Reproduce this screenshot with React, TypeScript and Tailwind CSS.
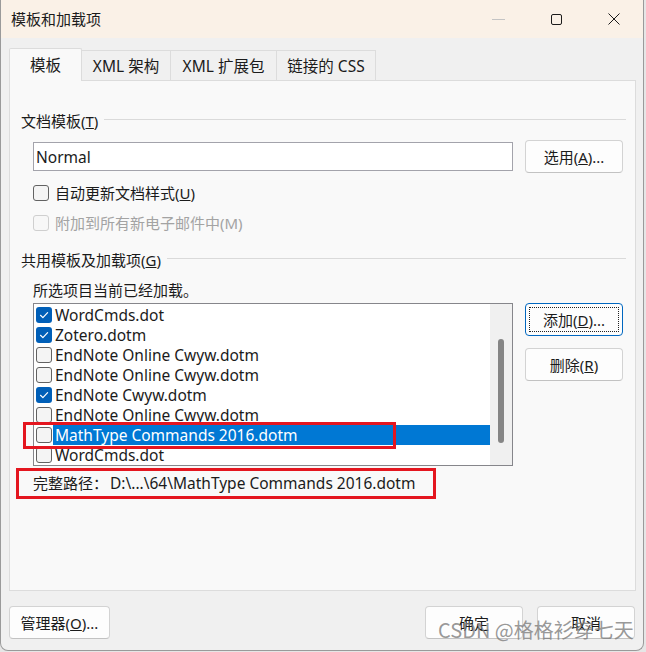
import React from "react";

const FONT = "font-['Noto_Sans','Noto_Sans_CJK_SC',sans-serif]";

function Check({ checked, disabled }: { checked?: boolean; disabled?: boolean }) {
  if (checked) {
    return (
      <span className="w-4 h-4 shrink-0 rounded-[3px] bg-[#005fb8] flex items-center justify-center">
        <svg width="12" height="12" viewBox="0 0 12 12" fill="none">
          <path d="M2.5 6.3 L4.9 8.6 L9.6 3.6" stroke="#ffffff" strokeWidth="1.2" strokeLinecap="round" strokeLinejoin="round" />
        </svg>
      </span>
    );
  }
  return (
    <span
      className={
        disabled
          ? "w-4 h-4 shrink-0 rounded-[3px] border border-[#cfcfcf] bg-[#f7f7f7]"
          : "w-4 h-4 shrink-0 rounded-[3px] border border-[#626262] bg-[#f4f4f4]"
      }
    />
  );
}

function Btn({ children, w, focused }: { children: React.ReactNode; w: string; focused?: boolean }) {
  return (
    <div
      className={
        (focused
          ? "border-[#0067c0] "
          : "border-[#d3d3d3] border-b-[#c2c2c2] ") +
        w +
        " h-[33px] rounded-[4px] border bg-[#fdfdfd] flex items-center justify-center relative text-[15px] leading-5 text-[#1b1b1b]"
      }
    >
      {focused && <div className="absolute inset-[3px] border border-dotted border-[#222]" />}
      <span className="relative">{children}</span>
    </div>
  );
}

const items: { name: string; checked: boolean; selected?: boolean }[] = [
  { name: "WordCmds.dot", checked: true },
  { name: "Zotero.dotm", checked: true },
  { name: "EndNote Online Cwyw.dotm", checked: false },
  { name: "EndNote Online Cwyw.dotm", checked: false },
  { name: "EndNote Cwyw.dotm", checked: true },
  { name: "EndNote Online Cwyw.dotm", checked: false },
  { name: "MathType Commands 2016.dotm", checked: false, selected: true },
  { name: "WordCmds.dot", checked: false },
];

function Header({ children }: { children: React.ReactNode }) {
  return (
    <div className="flex items-center h-5">
      <span className="text-[15px] leading-5 text-[#1b1b1b] whitespace-nowrap">{children}</span>
      <div className="flex-1 h-px bg-[#dadada] ml-[6px] mr-[9px] -mt-[3px]" />
    </div>
  );
}

export default function App() {
  return (
    <div className={"relative w-[646px] h-[652px] bg-[#e6e6e6] overflow-hidden " + FONT}>
      <div className="w-[644px] h-[651px] bg-[#f0f0f0] border-l border-r border-b border-[#9a9a9a] rounded-b-[8px] flex flex-col overflow-hidden">
        {/* Title bar */}
        <div className="h-[38px] bg-[#faf1e7] flex items-center shrink-0">
          <span className="pl-[10px] text-[15px] leading-5 text-[#1b1b1b]">模板和加载项</span>
          <div className="ml-auto flex h-full">
            <div className="w-[58px] h-full flex items-center justify-center">
              <div className="w-[13px] h-px bg-[#c4c4c4]" />
            </div>
            <div className="w-[58px] h-full flex items-center justify-center">
              <div className="w-[11px] h-[11px] border border-[#1b1b1b] rounded-[2px]" />
            </div>
            <div className="w-[58px] h-full flex items-center justify-center">
              <svg width="12" height="12" viewBox="0 0 12 12">
                <path d="M0.5 0.5 L11.5 11.5 M11.5 0.5 L0.5 11.5" stroke="#1b1b1b" strokeWidth="1" />
              </svg>
            </div>
          </div>
        </div>

        {/* Body */}
        <div className="pt-[10px] pl-[8px] pr-[8px] flex flex-col">
          {/* Tabs */}
          <div className="flex items-end h-[32px] text-[15.5px] leading-5 text-[#1b1b1b]">
            <div className="relative z-10 w-[73px] h-[33px] -mb-px bg-[#f9f9f9] border-t border-l border-r border-[#dcdcdc] rounded-t-[2px] flex items-center justify-center">
              模板
            </div>
            <div className="w-[89px] h-[30px] border-t border-r border-[#dcdcdc] flex items-center justify-center">
              XML 架构
            </div>
            <div className="w-[106px] h-[30px] border-t border-r border-[#dcdcdc] flex items-center justify-center">
              XML 扩展包
            </div>
            <div className="w-[99px] h-[30px] border-t border-r border-[#dcdcdc] flex items-center justify-center">
              链接的 CSS
            </div>
          </div>

          {/* Panel */}
          <div className="h-[511px] w-[627px] border border-[#dcdcdc] bg-[#f9f9f9] pl-[11px] pt-[30px] flex flex-col text-[15px] leading-5 text-[#1b1b1b]">
            <Header>
              文档模板(<span className="underline">T</span>)
            </Header>

            <div className="mt-[9px] ml-3 flex items-center gap-3">
              <div className="w-[480px] h-[29px] border border-[#a3a3ab] bg-white flex items-center pl-[2px] text-[15.5px]">
                Normal
              </div>
              <Btn w="w-[98px]">
                选用(<span className="underline">A</span>)...
              </Btn>
            </div>

            <div className="mt-[10px] ml-3 h-5 flex items-center">
              <Check />
              <span className="ml-[6px]">
                自动更新文档样式(<span className="underline">U</span>)
              </span>
            </div>
            <div className="mt-[10px] ml-3 h-5 flex items-center text-[#a3a3a3]">
              <Check disabled />
              <span className="ml-[6px]">附加到所有新电子邮件中(M)</span>
            </div>

            <div className="mt-[17px]">
              <Header>
                共用模板及加载项(<span className="underline">G</span>)
              </Header>
            </div>

            <div className="mt-[10px] ml-3 h-5">所选项目当前已经加载。</div>

            <div className="mt-[3px] ml-3 flex items-start gap-3">
              <div className="w-[480px] h-[163px] border border-[#86868b] bg-white flex">
                <div className="flex-1 pt-px flex flex-col">
                  {items.map((it, i) => (
                    <div key={i} className="h-5 flex items-center pl-[2px] text-[15.5px]">
                      <Check checked={it.checked} />
                      <span
                        className={
                          it.selected
                            ? "ml-px pl-[2px] flex-1 h-5 bg-[#0078d4] text-white whitespace-nowrap"
                            : "ml-px pl-[2px] flex-1 h-5 whitespace-nowrap"
                        }
                      >
                        {it.name}
                      </span>
                    </div>
                  ))}
                </div>
                <div className="w-[22px] h-full bg-[#f0f0f0] flex justify-center pt-[35px]">
                  <div className="w-[6px] h-[104px] rounded-full bg-[#858585]" />
                </div>
              </div>
              <div className="flex flex-col gap-3">
                <Btn w="w-[98px]" focused>
                  添加(<span className="underline">D</span>)...
                </Btn>
                <Btn w="w-[98px]">
                  删除(<span className="underline">R</span>)
                </Btn>
              </div>
            </div>

            <div className="mt-[7px] ml-3 h-5 flex whitespace-nowrap">
              <span>完整路径：</span>
              <span className="ml-[2px] text-[15.5px]">{"D:\\...\\64\\MathType Commands 2016.dotm"}</span>
            </div>
          </div>

          {/* Bottom buttons */}
          <div className="mt-[15px] flex items-center">
            <Btn w="w-[101px]">
              管理器(<span className="underline">O</span>)...
            </Btn>
            <div className="ml-auto flex gap-[14px]">
              <Btn w="w-[98px]">确定</Btn>
              <Btn w="w-[98px]">取消</Btn>
            </div>
          </div>
        </div>
      </div>

      {/* Red annotation boxes */}
      <div className="absolute left-[23px] top-[422px] w-[373px] h-[27px] border-[3px] border-[#e4161f]" />
      <div className="absolute left-[16px] top-[468px] w-[420px] h-[31px] border-[3px] border-[#e4161f]" />

      {/* Watermark */}
      <div className="absolute left-[438px] top-[617px] text-[20px] leading-[26px] text-[#7d7d7d]/80 whitespace-nowrap font-['Noto_Sans_CJK_SC',sans-serif]">
        CSDN @格格衫穿七天
      </div>
    </div>
  );
}
